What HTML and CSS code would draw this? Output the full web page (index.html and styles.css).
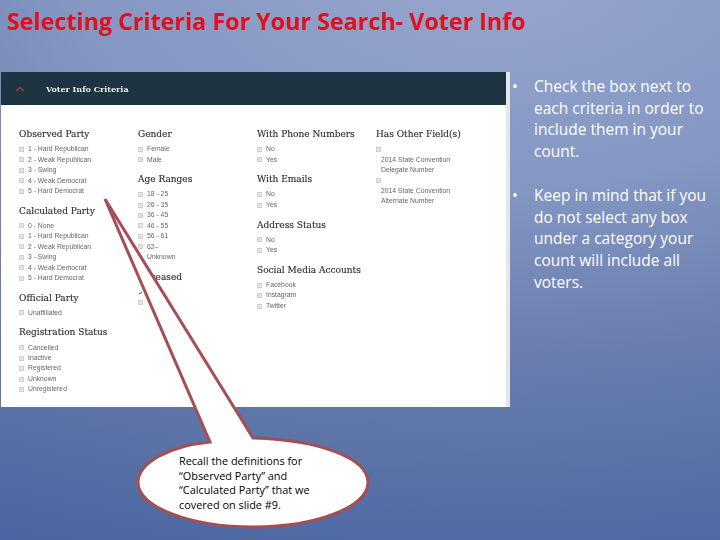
FILE: index.html
```html
<!DOCTYPE html>
<html lang="en">
<head>
<meta charset="utf-8">
<title>Selecting Criteria For Your Search- Voter Info</title>
<link rel="stylesheet" href="styles.css">
</head>
<body>
<main class="slide">
  <h1 class="title">Selecting Criteria For Your Search- Voter Info</h1>
  <div class="content">
    <section class="panel">
      <div class="panel-inner">
        <header class="panel-head">
          <svg class="chevron" width="10" height="6" viewBox="0 0 10 6"><path d="M1 5 L5 1.5 L9 5" fill="none" stroke="#8f4244" stroke-width="1.6"/></svg>
          <span class="panel-title">Voter Info Criteria</span>
        </header>
        <div class="columns">
          <div class="col">
            <h2>Observed Party</h2>
            <ul>
              <li><i></i>1 - Hard Republican</li>
              <li><i></i>2 - Weak Republican</li>
              <li><i></i>3 - Swing</li>
              <li><i></i>4 - Weak Democrat</li>
              <li><i></i>5 - Hard Democrat</li>
            </ul>
            <h2>Calculated Party</h2>
            <ul>
              <li><i></i>0 - None</li>
              <li><i></i>1 - Hard Republican</li>
              <li><i></i>2 - Weak Republican</li>
              <li><i></i>3 - Swing</li>
              <li><i></i>4 - Weak Democrat</li>
              <li><i></i>5 - Hard Democrat</li>
            </ul>
            <h2>Official Party</h2>
            <ul>
              <li><i></i>Unaffiliated</li>
            </ul>
            <h2>Registration Status</h2>
            <ul>
              <li><i></i>Cancelled</li>
              <li><i></i>Inactive</li>
              <li><i></i>Registered</li>
              <li><i></i>Unknown</li>
              <li><i></i>Unregistered</li>
            </ul>
          </div>
          <div class="col">
            <h2>Gender</h2>
            <ul>
              <li><i></i>Female</li>
              <li><i></i>Male</li>
            </ul>
            <h2>Age Ranges</h2>
            <ul>
              <li><i></i>18 - 25</li>
              <li><i></i>26 - 35</li>
              <li><i></i>36 - 45</li>
              <li><i></i>46 - 55</li>
              <li><i></i>56 - 61</li>
              <li><i></i>62&ndash;</li>
              <li class="indent">Unknown</li>
            </ul>
            <h2>Deceased</h2>
            <ul>
              <li><svg class="check" width="5" height="5" viewBox="0 0 5 5"><path d="M1 3 L2 3.8 L3.8 1.6" fill="none" stroke="#444" stroke-width="1"/></svg></li>
              <li><i></i></li>
            </ul>
          </div>
          <div class="col">
            <h2>With Phone Numbers</h2>
            <ul>
              <li><i></i>No</li>
              <li><i></i>Yes</li>
            </ul>
            <h2>With Emails</h2>
            <ul>
              <li><i></i>No</li>
              <li><i></i>Yes</li>
            </ul>
            <h2>Address Status</h2>
            <ul>
              <li><i></i>No</li>
              <li><i></i>Yes</li>
            </ul>
            <h2>Social Media Accounts</h2>
            <ul>
              <li><i></i>Facebook</li>
              <li><i></i>Instagram</li>
              <li><i></i>Twitter</li>
            </ul>
          </div>
          <div class="col">
            <h2>Has Other Field(s)</h2>
            <ul class="other">
              <li><i></i></li>
              <li class="sub">2014 State Convention</li>
              <li class="sub">Delegate Number</li>
              <li><i></i></li>
              <li class="sub">2014 State Convention</li>
              <li class="sub">Alternate Number</li>
            </ul>
          </div>
        </div>
      </div>
    </section>
    <aside class="notes">
      <ul>
        <li>Check the box next to each criteria in order to include them in your count.</li>
        <li>Keep in mind that if you do not select any box under a category your count will include all voters.</li>
      </ul>
    </aside>
  </div>
  <svg class="callout-shape" width="720" height="540" viewBox="0 0 720 540" aria-hidden="true">
    <path d="M105 199 L253 438 C320 440 368 458 368 482.5 C368 507 316 527 253 527 C190 527 138 507 138 482.5 C138 462 170 446 210 442 Z" fill="#fff" stroke="#a54f55" stroke-width="3" stroke-linejoin="miter"/>
  </svg>
  <p class="callout-text">Recall the definitions for “Observed Party” and “Calculated Party” that we covered on slide #9.</p>
</main>
</body>
</html>
```
FILE: styles.css
```css
* { box-sizing: border-box; }
html, body { margin: 0; padding: 0; }
body { width: 720px; height: 540px; overflow: hidden; }
.slide {
  position: relative;
  width: 720px;
  height: 540px;
  overflow: hidden;
  background: radial-gradient(ellipse 1200px 620px at 68% -5%, #96a6ce 0%, #8496c2 35%, #6e82b2 56%, #5a72a6 80%, #4a65a3 100%);
}
.title {
  margin: 0;
  height: 72px;
  padding: 4px 0 0 7px;
  font: 700 23.3px/34px "Open Sans", sans-serif;
  color: #e01020;
  white-space: nowrap;
}
.content { display: flex; align-items: flex-start; }
.panel {
  width: 509px;
  height: 335px;
  margin-left: 1px;
  flex: none;
  padding-right: 4px;
  background: #e3e7ec;
  filter: blur(0.4px);
}
.panel-inner { background: #fff; height: 100%; }
.panel-head {
  height: 33px;
  background: #1f3442;
  display: flex;
  align-items: center;
  padding-left: 14px;
  gap: 21px;
}
.chevron { flex: none; }
.panel-title { font: 700 8px "DejaVu Serif", serif; color: #e8ecef; }
.columns {
  display: grid;
  grid-template-columns: repeat(4, 119px);
  padding: 24px 0 0 18px;
}
.col h2 {
  margin: 0 0 5.2px;
  height: 10px;
  font: 400 9px/10px "DejaVu Serif", serif;
  color: #2e2e2e;
  -webkit-text-stroke: 0.15px #2e2e2e;
  white-space: nowrap;
}
.col ul { list-style: none; margin: 0 0 9.2px; padding: 0; }
.col li {
  height: 10.45px;
  display: flex;
  align-items: center;
  gap: 4px;
  font: 400 6.8px/10.45px "Liberation Sans", sans-serif;
  color: #666;
  white-space: nowrap;
}
.col i {
  flex: none;
  width: 5px;
  height: 5px;
  border: 1px solid #cfd0d2;
  background: #e4e4e4;
}
.col .check { flex: none; }
.col li.indent { padding-left: 9px; }
.col li.sub { padding-left: 5px; }
.notes { flex: 1; padding: 4px 6px 0 0; }
.notes ul { margin: 0; padding: 0; list-style: none; }
.notes li {
  position: relative;
  padding-left: 24px;
  margin-bottom: 22px;
  font: 400 15.5px/21.7px "Open Sans", sans-serif;
  color: #fff;
}
.notes li::before {
  content: "•";
  position: absolute;
  left: 2px;
  top: 0;
}
.callout-shape { position: absolute; left: 0; top: 0; pointer-events: none; }
.callout-text {
  position: absolute;
  left: 179px;
  top: 454px;
  width: 145px;
  margin: 0;
  font: 500 10.9px/14.6px "Open Sans", sans-serif;
  color: #000;
}
```
